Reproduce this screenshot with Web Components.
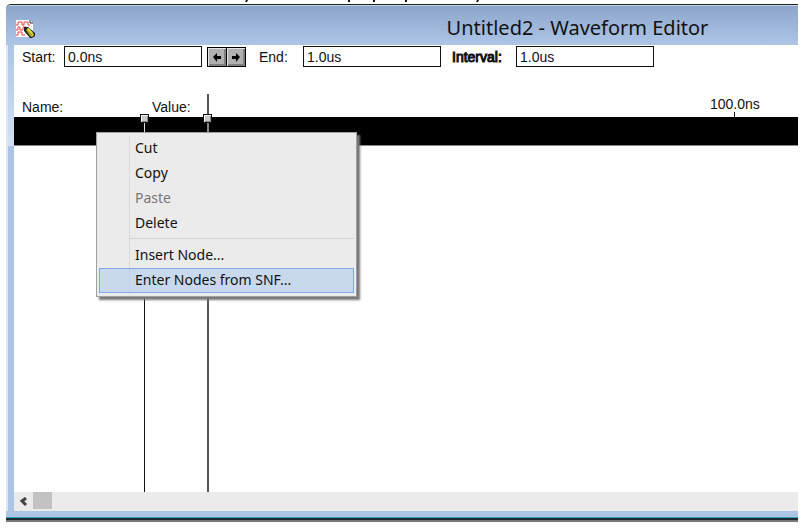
<!DOCTYPE html>
<html lang="en">
<head>
<meta charset="utf-8">
<title>Untitled2 - Waveform Editor</title>
<style>
  body {
    margin: 0;
    background: white;
    font-family: "Liberation Sans", Arial, sans-serif;
    font-size: 14px;
    color: #111;
  }
</style>
</head>
<body>
<page-edge></page-edge>
<editor-window>
  <title-bar slot="title">Untitled2 - Waveform Editor</title-bar>
  <time-toolbar slot="toolbar">
    <time-field name="start" label="Start:" value="0.0ns"></time-field>
    <step-buttons></step-buttons>
    <time-field name="end" label="End:" value="1.0us"></time-field>
    <time-field name="interval" label="Interval:" value="1.0us" strong></time-field>
  </time-toolbar>
  <wave-canvas>
    <context-menu>
      <menu-item>Cut</menu-item>
      <menu-item>Copy</menu-item>
      <menu-item disabled>Paste</menu-item>
      <menu-item>Delete</menu-item>
      <menu-separator></menu-separator>
      <menu-item>Insert Node...</menu-item>
      <menu-item active>Enter Nodes from SNF...</menu-item>
    </context-menu>
  </wave-canvas>
  <scroll-bar slot="scroll"></scroll-bar>
</editor-window>

<script>
class BaseElement extends HTMLElement {
  constructor() {
    super();
    this.attachShadow({ mode: "open" });
  }

  connectedCallback() {
    this.shadowRoot.innerHTML = this.template();
  }
}

class PageEdge extends BaseElement {
  template() {
    return `
    <style>
      :host { display: block; height: 4px; }
      svg { display: block; }
    </style>
    <svg width="500" height="4" aria-hidden="true">
      <path d="M246 0h2l-1 2h-2zM348 0h2v2h-2zM373 0h2v2h-2zM405 0h2v2h-2zM477 0h2l-1 2h-2z" fill="#111"/>
    </svg>
    `;
  }
}

class EditorWindow extends BaseElement {
  template() {
    return `
    <style>
      :host {
        display: flex;
        flex-direction: column;
        height: calc(100vh - 10px);
        margin: 0 6px;
        box-sizing: border-box;
        border-top: 1px solid #222;
        border-bottom: 2px solid #777;
        border-top-left-radius: 5px;
        background: #adc5e5;
        overflow: hidden;
      }
      #inner {
        flex: 1;
        min-height: 0;
        display: flex;
        flex-direction: column;
        padding-left: 8px;
        background:
          linear-gradient(#dce7f5, #dce7f5) 0 0 / 2px 100% no-repeat,
          linear-gradient(#adc6e6, #d3e1f3 101px, #adc5e5 101px) 0 0 / 8px 100% no-repeat,
          white;
      }
      ::slotted(wave-canvas) {
        flex: 1;
        min-height: 0;
      }
      #bottom {
        height: 9px;
        box-sizing: border-box;
        background: linear-gradient(#adc5e5 6px, #38a3b8 6px, #38a3b8 7px, #1b2a2c 7px);
      }
    </style>
    <slot name="title"></slot>
    <div id="inner">
      <slot name="toolbar"></slot>
      <slot></slot>
      <slot name="scroll"></slot>
    </div>
    <div id="bottom"></div>
    `;
  }
}

class TitleBar extends BaseElement {
  template() {
    return `
    <style>
      :host {
        display: flex;
        align-items: center;
        height: 34px;
        padding: 5px 0 0 10px;
        border-top: 1px solid #c5d3e6;
        background: linear-gradient(#8da5cb, #adc6e6);
        font-family: "Noto Sans", "Open Sans", sans-serif;
      }
      svg { display: block; }
      h1 {
        flex: 1;
        margin: 0 0 0 322px;
        text-align: center;
        font-size: 20px;
        line-height: 28px;
        font-weight: 400;
        white-space: nowrap;
      }
    </style>
    <svg width="19" height="19" viewBox="0 0 19 19" aria-hidden="true">
      <path d="M0 1h14l3 3v14H0z" fill="#fff"/>
      <path d="M14 1v3h3" stroke="#222" fill="#fff"/>
      <path d="M0 6h2V3h4v3h2V3h4v3h2M0 11h2V8h2v3h3V8h3v3M0 16h2v-3h4v3h3" stroke="#e8404a" fill="none"/>
      <path d="M8 8l4 0 7 6v3l-3 2h-2l-6-7z" fill="#222"/>
      <path d="M10 11l3-2 4 5-3 3z" fill="#a8ae20"/>
      <path d="M11 10l1-1 5 5-1 1z" fill="#eee840"/>
      <path d="M14 17l3-3 1 2-2 2z" fill="#d5cc28"/>
    </svg>
    <h1><slot></slot></h1>
    `;
  }
}

class TimeToolbar extends BaseElement {
  template() {
    return `
    <style>
      :host {
        display: flex;
        align-items: center;
        height: 23px;
        padding-left: 8px;
      }
      ::slotted(step-buttons) { margin: 0 13px 0 5px; }
      ::slotted(time-field[strong]) { margin-left: 11px; }
    </style>
    <slot></slot>
    `;
  }
}

class TimeField extends BaseElement {
  template() {
    const name = this.getAttribute("name");
    return `
    <style>
      :host { display: flex; align-items: center; }
      label { width: 42px; line-height: 16px; }
      :host([name="end"]) label { width: 44px; }
      :host([strong]) label {
        width: 64px;
        -webkit-text-stroke: 1px #111;
      }
      input {
        box-sizing: border-box;
        width: 138px;
        height: 21px;
        padding: 0 3px;
        border: 1px solid #111;
        border-radius: 0;
        background: white;
        font: inherit;
        color: inherit;
      }
    </style>
    <label for="field">${this.getAttribute("label")}</label>
    <input id="field" name="${name}" value="${this.getAttribute("value")}">
    `;
  }
}

class StepButtons extends BaseElement {
  template() {
    return `
    <style>
      :host { display: flex; }
      button {
        box-sizing: border-box;
        width: 20px;
        height: 20px;
        padding: 0;
        border: 1px solid #000;
        background: #b0b0b0;
        box-shadow: inset 1px 1px #e4e4e4, inset -2px -2px #808080;
      }
      button + button { margin-left: -1px; }
      svg { display: block; margin: auto; }
    </style>
    <button aria-label="Earlier"><svg width="10" height="10"><path d="M1 5l4-4v3h4v3H5v3z"/></svg></button>
    <button aria-label="Later"><svg width="10" height="10"><path d="M9 5L5 1v3H1v3h4v3z"/></svg></button>
    `;
  }
}

class WaveCanvas extends BaseElement {
  template() {
    return `
    <style>
      :host { display: block; position: relative; }
      #ruler {
        display: flex;
        align-items: flex-end;
        box-sizing: border-box;
        height: 49px;
        padding-left: 8px;
        line-height: 16px;
      }
      #name { width: 130px; padding-bottom: 2px; }
      #value { width: 558px; padding-bottom: 2px; }
      #tick {
        display: flex;
        flex-direction: column;
        align-items: center;
      }
      #tick::after {
        content: "";
        width: 1px;
        height: 5px;
        background: #111;
      }
      #row {
        height: 28px;
        background: black;
        border-bottom: 1px solid #888;
      }
      .cursor {
        position: absolute;
        bottom: 0;
        width: 1px;
        background: linear-gradient(#ddd 28px, #111 28px);
      }
      #divider { left: 130px; top: 49px; }
      #marker {
        left: 193px;
        top: 45px;
        top: 26px;
        width: 2px;
        background: linear-gradient(#555 23px, #888 23px, #888 51px, #555 51px);
      }
      .handle {
        position: absolute;
        top: 46px;
        box-sizing: border-box;
        width: 9px;
        height: 9px;
        border: 1px solid #111;
        background: #c8c8c8;
        box-shadow: inset 1px 1px #f2f2f2, inset -1px -1px #888;
      }
      #handle-a { left: 126px; }
      #handle-b { left: 189px; }
      ::slotted(context-menu) {
        position: absolute;
        left: 82px;
        top: 64px;
      }
    </style>
    <div id="ruler">
      <span id="name">Name:</span>
      <span id="value">Value:</span>
      <span id="tick">100.0ns</span>
    </div>
    <div id="row"></div>
    <div class="cursor" id="divider"></div>
    <div class="cursor" id="marker"></div>
    <div class="handle" id="handle-a"></div>
    <div class="handle" id="handle-b"></div>
    <slot></slot>
    `;
  }
}

class ContextMenu extends BaseElement {
  template() {
    return `
    <style>
      :host {
        display: block;
        box-sizing: border-box;
        width: 261px;
        padding: 3px 2px;
        border: 1px solid #a0a0a0;
        background: linear-gradient(#d8d8d8, #d8d8d8) 32px 3px / 1px calc(100% - 6px) no-repeat #ebebeb;
        box-shadow: 3px 3px 2px #777;
        font-family: "Noto Sans", "Open Sans", sans-serif;
        font-size: 14px;
      }
    </style>
    <div role="menu"><slot></slot></div>
    `;
  }
}

class MenuItem extends BaseElement {
  template() {
    return `
    <style>
      :host { display: block; }
      button {
        display: block;
        box-sizing: border-box;
        width: 100%;
        height: 25px;
        padding: 0 0 2px 35px;
        border: 1px solid transparent;
        background: none;
        font: inherit;
        color: #111;
        text-align: left;
      }
      button:disabled { color: #777; }
      :host([active]) button {
        border-color: #7da9e8;
        background: rgba(168, 200, 240, 0.5);
      }
    </style>
    <button role="menuitem" ${this.hasAttribute("disabled") ? "disabled" : ""}><slot></slot></button>
    `;
  }
}

class MenuSeparator extends BaseElement {
  template() {
    return `
    <style>
      :host {
        display: block;
        height: 1px;
        margin: 2px 0 4px 31px;
        background: #d0d4d0;
      }
    </style>
    `;
  }
}

class ScrollBar extends BaseElement {
  template() {
    return `
    <style>
      :host {
        display: flex;
        height: 19px;
        background: #ebebeb;
      }
      button {
        width: 19px;
        padding: 0;
        border: 0;
        background: none;
      }
      svg { display: block; margin: auto; }
      #thumb { width: 19px; height: 17px; background: #c2c2c2; }
    </style>
    <button aria-label="Scroll left">
      <svg width="9" height="9"><path d="M7 1L3 4l4 4" fill="none" stroke="#444" stroke-width="3"/></svg>
    </button>
    <div id="thumb"></div>
    `;
  }
}

customElements.define("page-edge", PageEdge);
customElements.define("editor-window", EditorWindow);
customElements.define("title-bar", TitleBar);
customElements.define("time-toolbar", TimeToolbar);
customElements.define("time-field", TimeField);
customElements.define("step-buttons", StepButtons);
customElements.define("wave-canvas", WaveCanvas);
customElements.define("context-menu", ContextMenu);
customElements.define("menu-item", MenuItem);
customElements.define("menu-separator", MenuSeparator);
customElements.define("scroll-bar", ScrollBar);
</script>
</body>
</html>
